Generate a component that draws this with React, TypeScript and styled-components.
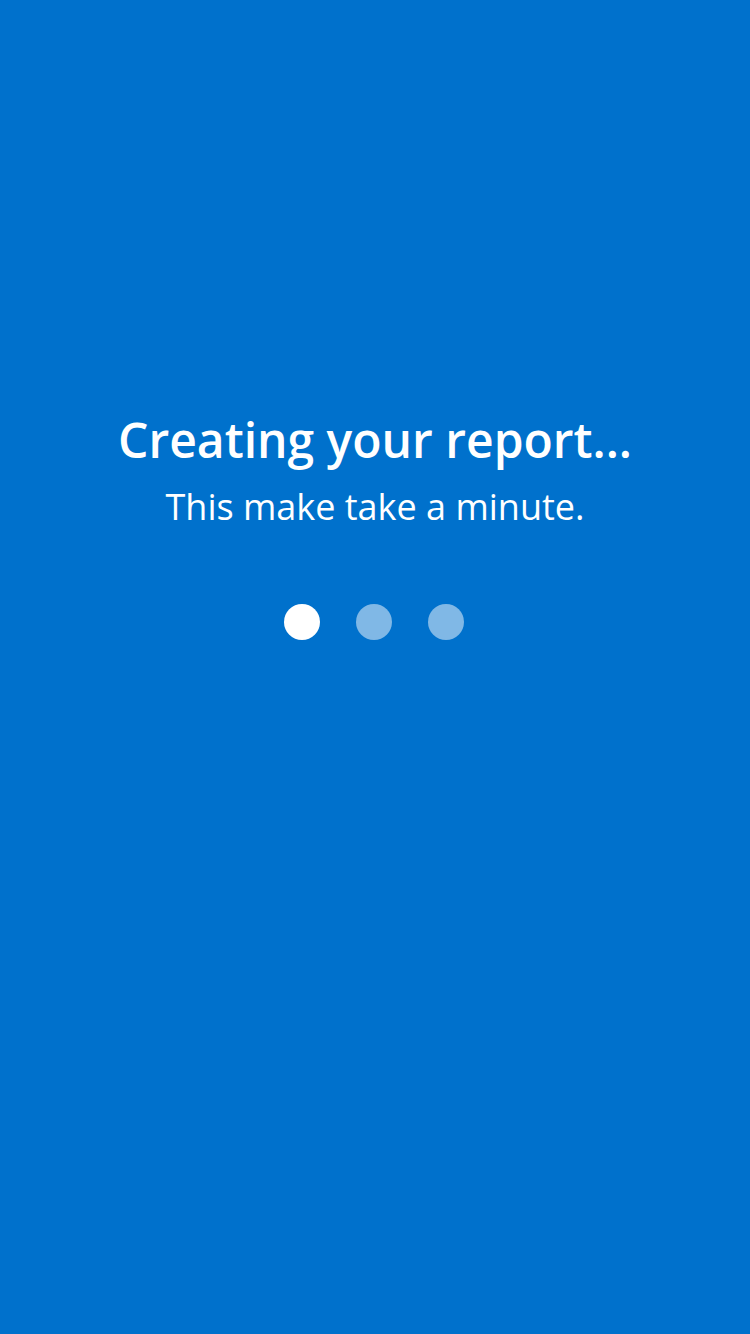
import React from "react";
import styled, { createGlobalStyle } from "styled-components";

const Global = createGlobalStyle`
  html, body { margin: 0; padding: 0; background: #0071cc; }
  body { font-family: "Open Sans", "Noto Sans", sans-serif; }
`;

const Screen = styled.div`
  width: 750px;
  height: 1334px;
  background: #0071cc;
  display: flex;
  flex-direction: column;
  align-items: center;
  padding-top: 408px;
  box-sizing: border-box;
  color: #ffffff;
`;

const Title = styled.h1`
  margin: 0;
  font-size: 48px;
  font-weight: 600;
  line-height: 64px;
  text-align: center;
`;

const Subtitle = styled.p`
  margin: 10px 0 0;
  font-size: 36px;
  font-weight: 400;
  line-height: 50px;
  text-align: center;
`;

const Dots = styled.div`
  display: flex;
  gap: 36px;
  margin: 72px 2px 0 0;
`;

const Dot = styled.span<{ $active?: boolean }>`
  width: 36px;
  height: 36px;
  border-radius: 50%;
  background: ${(p) => (p.$active ? "#ffffff" : "rgba(255,255,255,0.5)")};
`;

export default function App() {
  return (
    <>
      <Global />
      <Screen>
        <Title>Creating your report...</Title>
        <Subtitle>This make take a minute.</Subtitle>
        <Dots>
          <Dot $active />
          <Dot />
          <Dot />
        </Dots>
      </Screen>
    </>
  );
}
